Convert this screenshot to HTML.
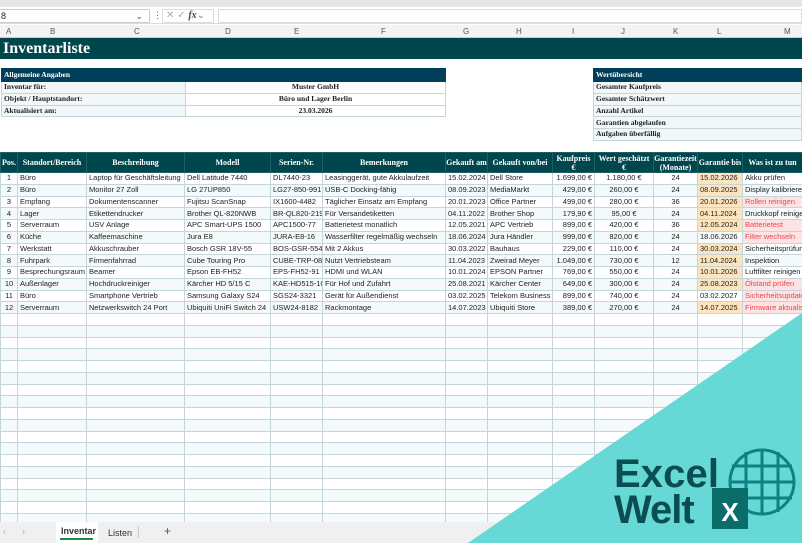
<!DOCTYPE html>
<html><head><meta charset="utf-8"><style>
*{margin:0;padding:0;box-sizing:border-box}
body{width:802px;height:543px;overflow:hidden;background:#fff;position:relative;font-family:"Liberation Sans",sans-serif;font-size:7.5px;color:#222}
.abs{position:absolute}
.ser{font-family:"Liberation Serif",serif;font-weight:bold}
table{border-collapse:collapse;table-layout:fixed;position:absolute}
td{border:1px solid #c5d6da;white-space:nowrap;overflow:hidden;padding:0 2px;line-height:10px;height:11.75px}
.h td{background:#00464d;color:#fff;font-family:"Liberation Serif",serif;font-weight:bold;text-align:center;border-color:#1e5e66;height:20px;line-height:9px;font-size:8px}
tr.alt td{background:#f4f9fb}
.c{text-align:center}.r{text-align:right}
.o{background:#fde4bd!important}
.p{background:#fde3e3!important;color:#e5484d}
.info td{font-size:7.5px}
</style></head><body>
<div class="abs" style="left:0;top:0;width:802px;height:7px;background:#e6e6e6"></div>
<div class="abs" style="left:0;top:7px;width:802px;height:17px;background:#fff;border-bottom:1px solid #ddd"></div>
<div class="abs" style="left:0;top:9px;width:150px;height:14px;border:1px solid #ccc;border-left:none;font-size:9px;line-height:12px;padding-left:1px">8<span style="position:absolute;right:6px;color:#555">⌄</span></div>
<div class="abs" style="left:153px;top:10px;color:#666;font-size:9px">⋮</div>
<div class="abs" style="left:162px;top:9px;width:52px;height:14px;border:1px solid #ddd;color:#aaa;font-size:10px;line-height:12px;padding-left:3px">✕ ✓ <i style="color:#444;font-family:'Liberation Serif';font-weight:bold">fx</i><span style="color:#888">⌄</span></div>
<div class="abs" style="left:218px;top:9px;width:584px;height:14px;border:1px solid #ddd"></div>
<div class="abs" style="left:0;top:25px;width:802px;height:13px;background:#f3f3f3;border-bottom:1px solid #ccc;color:#555;font-size:8px;line-height:13px">
<span class="abs" style="left:6px">A</span><span class="abs" style="left:50px">B</span><span class="abs" style="left:134px">C</span><span class="abs" style="left:225px">D</span><span class="abs" style="left:294px">E</span><span class="abs" style="left:381px">F</span><span class="abs" style="left:463px">G</span><span class="abs" style="left:516px">H</span><span class="abs" style="left:572px">I</span><span class="abs" style="left:621px">J</span><span class="abs" style="left:673px">K</span><span class="abs" style="left:717px">L</span><span class="abs" style="left:784px">M</span></div>
<div class="abs ser" style="left:0;top:38px;width:802px;height:21px;background:#00464d;color:#fff;font-size:16px;line-height:21px;padding-left:3px">Inventarliste</div>

<table class="info" style="left:1px;top:68px;width:444px;font-family:'Liberation Serif',serif;font-weight:bold">
<colgroup><col style="width:184px"><col style="width:260px"></colgroup>
<tr><td colspan="2" style="background:#003f5a;color:#fff;height:13px;border-color:#003f5a">Allgemeine Angaben</td></tr>
<tr><td style="background:#f2f7f9">Inventar für:</td><td class="c">Muster GmbH</td></tr>
<tr><td style="background:#f2f7f9">Objekt / Hauptstandort:</td><td class="c">Büro und Lager Berlin</td></tr>
<tr><td style="background:#f2f7f9">Aktualisiert am:</td><td class="c">23.03.2026</td></tr>
</table>
<table class="info" style="left:593px;top:68px;width:209px;font-family:'Liberation Serif',serif;font-weight:bold">
<tr><td style="background:#003f5a;color:#fff;height:13px;border-color:#003f5a">Wertübersicht</td></tr>
<tr><td style="background:#f2f7f9">Gesamter Kaufpreis</td></tr>
<tr><td style="background:#f2f7f9">Gesamter Schätzwert</td></tr>
<tr><td style="background:#f2f7f9">Anzahl Artikel</td></tr>
<tr><td style="background:#f2f7f9">Garantien abgelaufen</td></tr>
<tr><td style="background:#f2f7f9">Aufgaben überfällig</td></tr>
</table>

<table style="left:0;top:152px;width:802px">
<colgroup><col style="width:17px"><col style="width:69px"><col style="width:98px"><col style="width:86px"><col style="width:52px"><col style="width:123px"><col style="width:42px"><col style="width:65px"><col style="width:42px"><col style="width:59px"><col style="width:44px"><col style="width:45px"><col style="width:60px"></colgroup>
<tr class="h"><td style="padding:0">Pos.</td><td>Standort/Bereich</td><td>Beschreibung</td><td>Modell</td><td>Serien-Nr.</td><td>Bemerkungen</td><td style="padding:0">Gekauft am</td><td>Gekauft von/bei</td><td>Kaufpreis<br>€</td><td style="padding:0">Wert geschätzt<br>€</td><td style="padding:0">Garantiezeit<br>(Monate)</td><td style="padding:0">Garantie bis</td><td>Was ist zu tun</td></tr>
<tr><td class="c">1</td><td>Büro</td><td>Laptop für Geschäftsleitung</td><td>Dell Latitude 7440</td><td>DL7440-23</td><td>Leasinggerät, gute Akkulaufzeit</td><td>15.02.2024</td><td>Dell Store</td><td class="r">1.699,00 €</td><td class="c">1.180,00 €</td><td class="c">24</td><td class="o">15.02.2026</td><td>Akku prüfen</td></tr>
<tr class="alt"><td class="c">2</td><td>Büro</td><td>Monitor 27 Zoll</td><td>LG 27UP850</td><td>LG27-850-991</td><td>USB-C Docking-fähig</td><td>08.09.2023</td><td>MediaMarkt</td><td class="r">429,00 €</td><td class="c">260,00 €</td><td class="c">24</td><td class="o">08.09.2025</td><td>Display kalibrieren</td></tr>
<tr><td class="c">3</td><td>Empfang</td><td>Dokumentenscanner</td><td>Fujitsu ScanSnap</td><td>IX1600-4482</td><td>Täglicher Einsatz am Empfang</td><td>20.01.2023</td><td>Office Partner</td><td class="r">499,00 €</td><td class="c">280,00 €</td><td class="c">36</td><td class="o">20.01.2026</td><td class="p">Rollen reinigen</td></tr>
<tr class="alt"><td class="c">4</td><td>Lager</td><td>Etikettendrucker</td><td>Brother QL-820NWB</td><td>BR-QL820-219</td><td>Für Versandetiketten</td><td>04.11.2022</td><td>Brother Shop</td><td class="r">179,90 €</td><td class="c">95,00 €</td><td class="c">24</td><td class="o">04.11.2024</td><td>Druckkopf reinigen</td></tr>
<tr><td class="c">5</td><td>Serverraum</td><td>USV Anlage</td><td>APC Smart-UPS 1500</td><td>APC1500-77</td><td>Batterietest monatlich</td><td>12.05.2021</td><td>APC Vertrieb</td><td class="r">899,00 €</td><td class="c">420,00 €</td><td class="c">36</td><td class="o">12.05.2024</td><td class="p">Batterietest</td></tr>
<tr class="alt"><td class="c">6</td><td>Küche</td><td>Kaffeemaschine</td><td>Jura E8</td><td>JURA-E8-16</td><td>Wasserfilter regelmäßig wechseln</td><td>18.06.2024</td><td>Jura Händler</td><td class="r">999,00 €</td><td class="c">820,00 €</td><td class="c">24</td><td>18.06.2026</td><td class="p">Filter wechseln</td></tr>
<tr><td class="c">7</td><td>Werkstatt</td><td>Akkuschrauber</td><td>Bosch GSR 18V-55</td><td>BOS-GSR-554</td><td>Mit 2 Akkus</td><td>30.03.2022</td><td>Bauhaus</td><td class="r">229,00 €</td><td class="c">110,00 €</td><td class="c">24</td><td class="o">30.03.2024</td><td>Sicherheitsprüfung</td></tr>
<tr class="alt"><td class="c">8</td><td>Fuhrpark</td><td>Firmenfahrrad</td><td>Cube Touring Pro</td><td>CUBE-TRP-08</td><td>Nutzt Vertriebsteam</td><td>11.04.2023</td><td>Zweirad Meyer</td><td class="r">1.049,00 €</td><td class="c">730,00 €</td><td class="c">12</td><td class="o">11.04.2024</td><td>Inspektion</td></tr>
<tr><td class="c">9</td><td>Besprechungsraum</td><td>Beamer</td><td>Epson EB-FH52</td><td>EPS-FH52-91</td><td>HDMI und WLAN</td><td>10.01.2024</td><td>EPSON Partner</td><td class="r">769,00 €</td><td class="c">550,00 €</td><td class="c">24</td><td class="o">10.01.2026</td><td>Luftfilter reinigen</td></tr>
<tr class="alt"><td class="c">10</td><td>Außenlager</td><td>Hochdruckreiniger</td><td>Kärcher HD 5/15 C</td><td>KAE-HD515-10</td><td>Für Hof und Zufahrt</td><td>25.08.2021</td><td>Kärcher Center</td><td class="r">649,00 €</td><td class="c">300,00 €</td><td class="c">24</td><td class="o">25.08.2023</td><td class="p">Ölstand prüfen</td></tr>
<tr><td class="c">11</td><td>Büro</td><td>Smartphone Vertrieb</td><td>Samsung Galaxy S24</td><td>SGS24-3321</td><td>Gerät für Außendienst</td><td>03.02.2025</td><td>Telekom Business</td><td class="r">899,00 €</td><td class="c">740,00 €</td><td class="c">24</td><td>03.02.2027</td><td class="p">Sicherheitsupdate</td></tr>
<tr class="alt"><td class="c">12</td><td>Serverraum</td><td>Netzwerkswitch 24 Port</td><td>Ubiquiti UniFi Switch 24</td><td>USW24-8182</td><td>Rackmontage</td><td>14.07.2023</td><td>Ubiquiti Store</td><td class="r">389,00 €</td><td class="c">270,00 €</td><td class="c">24</td><td class="o">14.07.2025</td><td class="p">Firmware aktualisieren</td></tr>
<tr><td></td><td></td><td></td><td></td><td></td><td></td><td></td><td></td><td></td><td></td><td></td><td></td><td></td></tr>
<tr class="alt"><td></td><td></td><td></td><td></td><td></td><td></td><td></td><td></td><td></td><td></td><td></td><td></td><td></td></tr>
<tr><td></td><td></td><td></td><td></td><td></td><td></td><td></td><td></td><td></td><td></td><td></td><td></td><td></td></tr>
<tr class="alt"><td></td><td></td><td></td><td></td><td></td><td></td><td></td><td></td><td></td><td></td><td></td><td></td><td></td></tr>
<tr><td></td><td></td><td></td><td></td><td></td><td></td><td></td><td></td><td></td><td></td><td></td><td></td><td></td></tr>
<tr class="alt"><td></td><td></td><td></td><td></td><td></td><td></td><td></td><td></td><td></td><td></td><td></td><td></td><td></td></tr>
<tr><td></td><td></td><td></td><td></td><td></td><td></td><td></td><td></td><td></td><td></td><td></td><td></td><td></td></tr>
<tr class="alt"><td></td><td></td><td></td><td></td><td></td><td></td><td></td><td></td><td></td><td></td><td></td><td></td><td></td></tr>
<tr><td></td><td></td><td></td><td></td><td></td><td></td><td></td><td></td><td></td><td></td><td></td><td></td><td></td></tr>
<tr class="alt"><td></td><td></td><td></td><td></td><td></td><td></td><td></td><td></td><td></td><td></td><td></td><td></td><td></td></tr>
<tr><td></td><td></td><td></td><td></td><td></td><td></td><td></td><td></td><td></td><td></td><td></td><td></td><td></td></tr>
<tr class="alt"><td></td><td></td><td></td><td></td><td></td><td></td><td></td><td></td><td></td><td></td><td></td><td></td><td></td></tr>
<tr><td></td><td></td><td></td><td></td><td></td><td></td><td></td><td></td><td></td><td></td><td></td><td></td><td></td></tr>
<tr class="alt"><td></td><td></td><td></td><td></td><td></td><td></td><td></td><td></td><td></td><td></td><td></td><td></td><td></td></tr>
<tr><td></td><td></td><td></td><td></td><td></td><td></td><td></td><td></td><td></td><td></td><td></td><td></td><td></td></tr>
<tr class="alt"><td></td><td></td><td></td><td></td><td></td><td></td><td></td><td></td><td></td><td></td><td></td><td></td><td></td></tr>
<tr><td></td><td></td><td></td><td></td><td></td><td></td><td></td><td></td><td></td><td></td><td></td><td></td><td></td></tr>
<tr class="alt"><td></td><td></td><td></td><td></td><td></td><td></td><td></td><td></td><td></td><td></td><td></td><td></td><td></td></tr>
</table>

<div class="abs" style="left:0;top:522px;width:802px;height:21px;background:#f0f0f0;font-size:9px;color:#333">
<span class="abs" style="left:3px;top:4px;color:#aaa">‹</span><span class="abs" style="left:22px;top:4px;color:#aaa">›</span>
<div class="abs" style="left:56px;top:0;width:42px;height:21px;background:#fff;"><span class="abs" style="left:5px;top:4px;font-weight:bold">Inventar</span><div class="abs" style="left:4px;top:16px;width:33px;height:2px;background:#1e8a4c"></div></div>
<span class="abs" style="left:108px;top:6px">Listen</span>
<div class="abs" style="left:138px;top:4px;width:1px;height:12px;background:#ccc"></div>
<span class="abs" style="left:164px;top:2px;font-size:12px;color:#555">+</span>
</div>

<svg class="abs" style="left:0;top:0" width="802" height="543">
<polygon points="802,313 802,543 468,543" fill="#66d9d7"/>
<g fill="none" stroke="#0f8280" stroke-width="3">
<circle cx="762" cy="482" r="32"/>
<line x1="746" y1="452" x2="746" y2="512"/><line x1="762" y1="450" x2="762" y2="514"/><line x1="778" y1="452" x2="778" y2="512"/>
<line x1="732" y1="466" x2="792" y2="466"/><line x1="730" y1="482" x2="794" y2="482"/><line x1="732" y1="498" x2="792" y2="498"/>
</g>
<rect x="712" y="488" width="36" height="41" fill="#0b6d6a"/>
<text x="730" y="521" text-anchor="middle" font-family="Liberation Sans" font-weight="bold" font-size="26" fill="#fff">X</text>
<text x="614" y="487" font-family="Liberation Sans" font-weight="bold" font-size="40" fill="#0c4d52" letter-spacing="-1" textLength="104">Excel</text>
<text x="614" y="523" font-family="Liberation Sans" font-weight="bold" font-size="40" fill="#0c4d52" letter-spacing="-1">Welt</text>
</svg>
</body></html>
